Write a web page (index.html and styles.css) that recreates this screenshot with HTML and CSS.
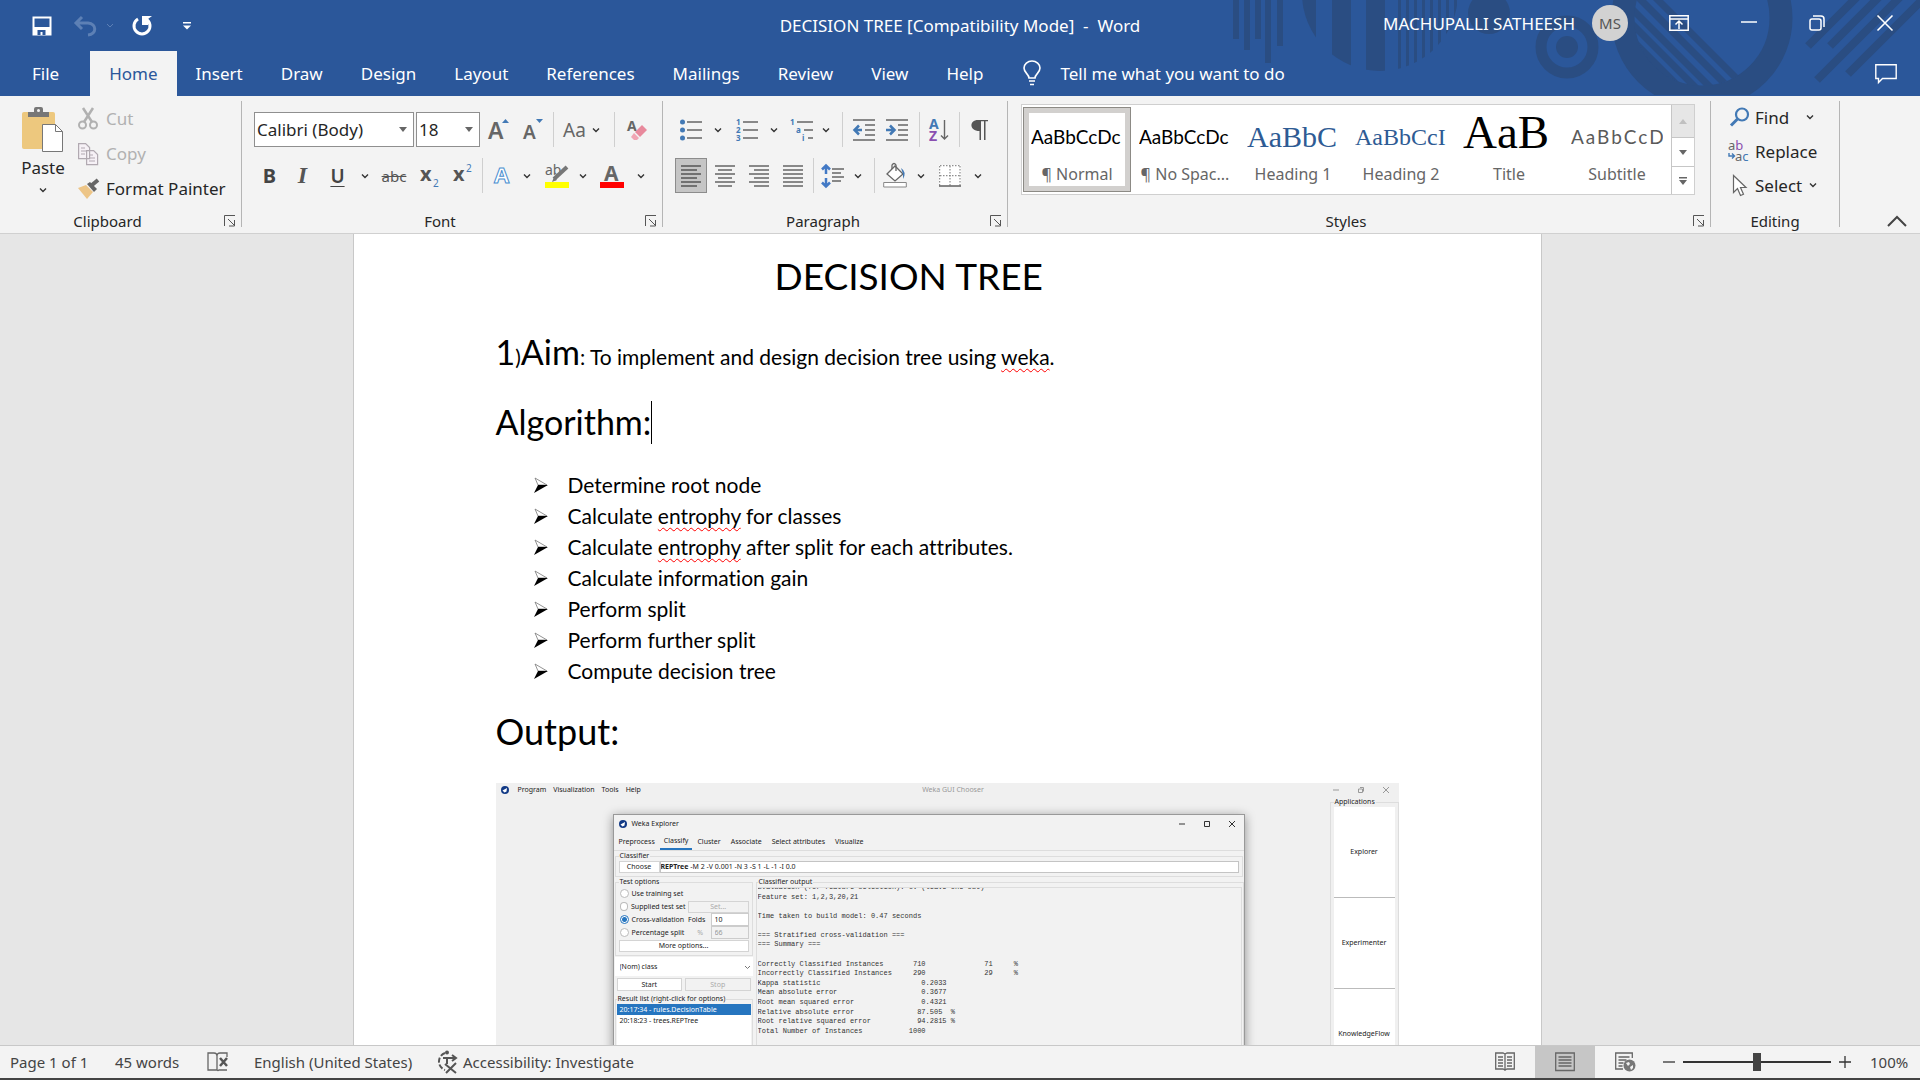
FILE: index.html
```html
<!DOCTYPE html>
<html lang="en">
<head>
<meta charset="utf-8">
<title>DECISION TREE [Compatibility Mode] - Word</title>
<link rel="stylesheet" href="styles.css">
</head>
<body>
<svg class="defs" aria-hidden="true">
  <symbol id="caret" viewBox="0 0 8 6"><path d="M1 1.5l3 3 3-3" fill="none" stroke="#333" stroke-width="1.4"/></symbol>
  <symbol id="launcher" viewBox="0 0 12 12"><path d="M.5 11V.5H11M4 4l6 6M10.500 5v6H5" fill="none" stroke="#555"/></symbol>
  <symbol id="weka" viewBox="0 0 8 8"><circle cx="4" cy="4" r="4" fill="#123a86"/><path d="M1.500 4.500L6 2l-.5 3.500-2 1z" fill="#fff"/></symbol>
  <symbol id="arrow" viewBox="0 0 14 16"><path d="M1 1l12 7H4z" fill="#fff" stroke="#777" stroke-width=".8"/><path d="M4 8h10L0 16z"/></symbol>
</svg>

<header class="header">
  <svg class="decor" width="700" height="96" viewBox="0 0 700 96" aria-hidden="true">
    <clipPath id="disc"><circle cx="160" cy="-7" r="78"/></clipPath>
    <clipPath id="hole"><circle cx="482" cy="18" r="68"/></clipPath>
    <clipPath id="cut"><path d="M0 0h700v95H0z"/></clipPath>
    <path d="M13 0h6v39h-6zM24 0h6v50h-6zM35 0h6v39h-6zM45 0h6v63h-6zM57 0h6v46h-6z"/>
    <path clip-path="url(#disc)" d="M80 0h16v80H80zM112 0h19v80h-19zM146 0h19v80h-19zM178 0h3v80h-3zM186 0h3v80h-3zM194 0h3v80h-3zM202 0h3v80h-3zM210 0h3v80h-3zM218 0h3v80h-3zM226 0h3v80h-3zM234 0h3v80h-3z"/>
    <circle cx="269" cy="13" r="21"/>
    <circle cx="347" cy="47" r="11"/>
    <g fill="none" stroke="#2a4d82">
      <circle cx="347" cy="47" r="26" stroke-width="11"/>
      <circle cx="482" cy="18" r="79" stroke-width="23" clip-path="url(#cut)"/>
      <path clip-path="url(#hole)" stroke-width="7" d="M380-8l100 100M395-8l100 100M413-8l100 100M430-8l100 100M364-8l100 100"/>
      <path stroke-width="8" d="M588 46l50-50M610 46l50-50M628 74l78-78M597 80l84-84"/>
    </g>
  </svg>

  <div class="titlebar">
    <div class="quick">
      <button aria-label="Save"><svg width="20" height="20"><path d="M1.500 1.500h17v17h-17z" fill="none" stroke="#fff" stroke-width="2"/><path d="M1 11h18v8H1z" fill="#fff"/><path d="M5.500 14h8v5h-3v-3h-2v3h-3z" fill="#2b579a"/></svg></button>
      <button aria-label="Undo"><svg width="24" height="20"><path d="M8 1L2 7l6 6M2 7h12c9 1 9 11 0 12" fill="none" stroke="#5d80b5" stroke-width="3"/></svg></button>
      <button aria-label="Undo history"><svg width="8" height="6"><path d="M1 1l3 3 3-3" fill="none" stroke="#5d80b5"/></svg></button>
      <button aria-label="Repeat"><svg width="22" height="22"><path d="M7 4a8 8 0 1 0 8 0" fill="none" stroke="#fff" stroke-width="3"/><path d="M11 1h10l-4 3v6h-6z" fill="#fff"/></svg></button>
      <button aria-label="Customize toolbar"><svg width="8" height="8"><path d="M0 0h8v1.500H0zM0 3.500h8l-4 4z" fill="#fff"/></svg></button>
    </div>
    <h1 class="doc-name">DECISION TREE [Compatibility Mode]&nbsp; -&nbsp; Word</h1>
    <div class="window-tools">
      <span class="user">MACHUPALLI SATHEESH</span>
      <span class="avatar">MS</span>
      <button aria-label="Ribbon display options"><svg width="20" height="16"><path d="M.8.8h18.400v14.400H.8zM1 4h18M10 14V6.500M6.500 9.500L10 6l3.500 3.500" fill="none" stroke="#fff" stroke-width="1.500"/></svg></button>
      <button aria-label="Minimize"><svg width="16" height="16"><path d="M0 7h16" stroke="#fff" stroke-width="1.500"/></svg></button>
      <button aria-label="Restore"><svg width="16" height="16"><rect x="1" y="4" width="11" height="11" rx="2" fill="none" stroke="#fff" stroke-width="1.500"/><path d="M4 1h8q3 0 3 3v8" fill="none" stroke="#fff" stroke-width="1.500"/></svg></button>
      <button aria-label="Close"><svg width="16" height="16"><path d="M.5.5l15 15M15.500.5l-15 15" stroke="#fff" stroke-width="1.600"/></svg></button>
    </div>
  </div>

  <nav class="tabs">
    <button class="file">File</button>
    <button class="active">Home</button>
    <button>Insert</button>
    <button>Draw</button>
    <button>Design</button>
    <button>Layout</button>
    <button>References</button>
    <button>Mailings</button>
    <button>Review</button>
    <button>View</button>
    <button>Help</button>
    <button class="tell"><svg width="18" height="25"><path d="M6 17c0-4-5-5-5-10a8 7 0 0 1 16 0c0 5-5 6-5 10zM6 20h6M7 23.500h4" fill="none" stroke="#fff" stroke-width="1.600"/></svg>Tell me what you want to do</button>
    <button class="comments" aria-label="Comments"><svg width="22" height="20"><path d="M.8.8h20.400v13.700H7.500L3.500 18.500v-4H.8z" fill="none" stroke="#fff" stroke-width="1.400"/></svg></button>
  </nav>
</header>

<section class="ribbon" aria-label="Home ribbon">
  <div class="group clipboard">
    <div class="clip-body">
      <button class="paste"><svg width="42" height="46"><path d="M2 5h29q2 0 2 2v33q0 2-2 2H2q-2 0-2-2V7q0-2 2-2z" fill="#edc87e"/><path d="M6 5h6V2q0-2 2-2h5q2 0 2 2v3h6v5H6z" fill="#777"/><circle cx="16.500" cy="3.500" r="1.500" fill="#f3f3f3"/><path d="M20.500 17.500h13l7 7v20h-20z" fill="#fff" stroke="#777"/><path d="M33.500 17.500v7h7" fill="none" stroke="#777"/></svg><span>Paste</span><svg width="8" height="6"><use href="#caret"/></svg></button>
      <div class="commands">
        <button class="off"><svg width="20" height="23"><g fill="none" stroke="#b1b1b1" stroke-width="2"><circle cx="4.500" cy="18" r="3.500"/><circle cx="15.500" cy="18" r="3.500"/><path d="M5 1l9 14M15 1L6 15" stroke-width="2.500"/></g></svg>Cut</button>
        <button class="off"><svg width="20" height="22"><g fill="#f6f1f6" stroke="#b1a9b1" stroke-width="1.200"><path d="M.6.6h7l4 4v11H.6zM8.600 7.600h7l4 4v10h-11z"/><path d="M3 5h4M3 8h5M3 11h4M11 12h4M11 15h6M11 18h6"/></g></svg>Copy</button>
        <button><svg width="22" height="20"><path d="M0 9l8-3 7 7-6 7z" fill="#edc587"/><path d="M9 5l3-2 7 7-3 3z" fill="#666"/><path d="M14 6l6-5" stroke="#666" stroke-width="4"/></svg>Format Painter</button>
      </div>
    </div>
    <h2>Clipboard</h2>
    <button class="launch" aria-label="Clipboard options"><svg width="12" height="12"><use href="#launcher"/></svg></button>
  </div>

  <div class="group font">
    <div class="row font-a">
      <label class="combo"><input value="Calibri (Body)" aria-label="Font"><svg width="8" height="5"><path d="M0 0h8L4 5z" fill="#666"/></svg></label>
      <label class="combo size"><input value="18" aria-label="Font size"><svg width="8" height="5"><path d="M0 0h8L4 5z" fill="#666"/></svg></label>
      <button aria-label="Grow font"><svg width="22" height="24"><text x="0" y="21" class="g-big">A</text><path d="M14 5l3.500-4L21 5z" fill="#4279b5"/></svg></button>
      <button aria-label="Shrink font"><svg width="20" height="24"><text x="0" y="21" class="g-mid">A</text><path d="M13 1h7l-3.500 4z" fill="#4279b5"/></svg></button>
      <i></i>
      <button class="case">Aa</button>
      <button aria-label="Case options"><svg width="8" height="6"><use href="#caret"/></svg></button>
      <i></i>
      <button aria-label="Clear formatting"><svg width="20" height="24"><text x="0" y="13" class="g-small">A</text><path d="M8 14l7-7 5 5-7 7z" fill="#e8899c"/><path d="M7 15l5 5-2 2H7l-3-3z" fill="#f0a5b3"/></svg></button>
    </div>
    <div class="row font-b">
      <button class="bold">B</button>
      <button class="italic">I</button>
      <button class="under">U</button>
      <button aria-label="Underline options"><svg width="8" height="6"><use href="#caret"/></svg></button>
      <button class="strike">abc</button>
      <button aria-label="Subscript"><svg width="20" height="26"><text x="0" y="18" class="g-x">x</text><text x="13" y="24" class="g-n">2</text></svg></button>
      <button aria-label="Superscript"><svg width="20" height="26"><text x="0" y="18" class="g-x">x</text><text x="13" y="9" class="g-n">2</text></svg></button>
      <i></i>
      <button aria-label="Text effects"><svg width="20" height="24"><text x="2" y="19" class="g-fx">A</text></svg></button>
      <button aria-label="Effect options"><svg width="8" height="6"><use href="#caret"/></svg></button>
      <button aria-label="Highlight"><svg width="24" height="26"><text x="0" y="12" class="g-ab">ab</text><path d="M22 4L9 16" stroke="#777" stroke-width="4"/><path d="M9 14l3 3-5 2z" fill="#777"/><path d="M0 19h24v6H0z" fill="#ff0"/></svg></button>
      <button aria-label="Highlight options"><svg width="8" height="6"><use href="#caret"/></svg></button>
      <button aria-label="Font colour"><svg width="24" height="26"><text x="4" y="18" class="g-col">A</text><path d="M0 19h24v6H0z" fill="#f00"/></svg></button>
      <button aria-label="Colour options"><svg width="8" height="6"><use href="#caret"/></svg></button>
    </div>
    <h2>Font</h2>
    <button class="launch" aria-label="Font options"><svg width="12" height="12"><use href="#launcher"/></svg></button>
  </div>

  <div class="group para">
    <div class="row para-a">
      <button aria-label="Bullets"><svg width="22" height="22"><path d="M7 3h15M7 11h15M7 19h15" stroke="#666" stroke-width="1.300"/><g fill="#4279b5"><circle cx="2.500" cy="3" r="2.500"/><circle cx="2.500" cy="11" r="2.500"/><circle cx="2.500" cy="19" r="2.500"/></g></svg></button>
      <button aria-label="Bullet options"><svg width="8" height="6"><use href="#caret"/></svg></button>
      <button aria-label="Numbering"><svg width="22" height="24"><path d="M7 4h15M7 12h15M7 20h15" stroke="#666" stroke-width="1.300"/><text class="g-l" x="0" y="7">1</text><text class="g-l" x="0" y="15">2</text><text class="g-l" x="0" y="23">3</text></svg></button>
      <button aria-label="Numbering options"><svg width="8" height="6"><use href="#caret"/></svg></button>
      <button aria-label="Multilevel list"><svg width="23" height="24"><path d="M7 4h16M14 12h9M18 20h5" stroke="#666" stroke-width="1.300"/><text class="g-l" x="0" y="7">1</text><text class="g-l" x="6" y="15">a</text><text class="g-l" x="12" y="23">i</text></svg></button>
      <button aria-label="List options"><svg width="8" height="6"><use href="#caret"/></svg></button>
      <i></i>
      <button aria-label="Decrease indent"><svg width="22" height="22"><path d="M0 1h22M12 6h10M12 11h10M12 16h10M0 21h22" stroke="#666" stroke-width="1.300"/><path d="M9 11H2M6 6.500L1.500 11 6 15.500" fill="none" stroke="#4279b5" stroke-width="2.500"/></svg></button>
      <button aria-label="Increase indent"><svg width="22" height="22"><path d="M0 1h22M12 6h10M12 11h10M12 16h10M0 21h22" stroke="#666" stroke-width="1.300"/><path d="M0 11h7M4 6.500L8.500 11 4 15.500" fill="none" stroke="#4279b5" stroke-width="2.500"/></svg></button>
      <i></i>
      <button aria-label="Sort"><svg width="20" height="24"><text x="0" y="11" class="g-az">A</text><text x="0" y="23" class="g-az z">Z</text><path d="M15.500 2v19M12 17.500l3.500 3.500 3.500-3.500" fill="none" stroke="#666" stroke-width="1.400"/></svg></button>
      <i></i>
      <button aria-label="Show marks"><svg width="17" height="22"><path d="M7 1h10v1.300h-2.500V21H13V2.300h-3V21H8.500V12C-2 12-2 1 7 1z" fill="#555"/></svg></button>
    </div>
    <div class="row para-b">
      <button class="on" aria-label="Align left"><svg width="20" height="22"><path d="M0 1h20M0 5h16M0 9h20M0 13h16M0 17h20M0 21h16" stroke="#555" stroke-width="1.300"/></svg></button>
      <button aria-label="Centre"><svg width="20" height="22"><path d="M0 1h20M3 5h14M0 9h20M3 13h14M0 17h20M3 21h14" stroke="#666" stroke-width="1.300"/></svg></button>
      <button aria-label="Align right"><svg width="20" height="22"><path d="M0 1h20M5 5h15M0 9h20M5 13h15M0 17h20M5 21h15" stroke="#666" stroke-width="1.300"/></svg></button>
      <button aria-label="Justify"><svg width="20" height="22"><path d="M0 1h20M0 5h20M0 9h20M0 13h20M0 17h20M0 21h20" stroke="#666" stroke-width="1.300"/></svg></button>
      <i></i>
      <button aria-label="Line spacing"><svg width="22" height="24"><path d="M10 5h12M10 9h9M10 13h12M10 17h9" stroke="#666" stroke-width="1.300"/><path d="M4 2v8M4 14v8M0 5.500L4 1.500l4 4M0 18.500l4 4 4-4" fill="none" stroke="#4279c5" stroke-width="2.500"/></svg></button>
      <button aria-label="Spacing options"><svg width="8" height="6"><use href="#caret"/></svg></button>
      <i></i>
      <button aria-label="Shading"><svg width="24" height="25"><path d="M4 11l8-8 8 8-8 7z" fill="#fff" stroke="#666" stroke-width="1.300"/><path d="M9 6V2q2-3 4 0v6" fill="none" stroke="#666" stroke-width="1.300"/><path d="M18 5q6 4 2 11v-5z" fill="#4279b5"/><path d="M.7 19.500h22.600v4.500H.7z" fill="#fff" stroke="#888"/></svg></button>
      <button aria-label="Shading options"><svg width="8" height="6"><use href="#caret"/></svg></button>
      <button aria-label="Borders"><svg width="22" height="22"><path d="M0 0h22v21H0z" fill="#fff"/><path d="M1 .7h20M.7 1v20M21 1v20M11 1v20M1 10.700h20" stroke="#777" stroke-dasharray="1.500 1.500"/><path d="M0 21h22" stroke="#555" stroke-width="1.400"/></svg></button>
      <button aria-label="Border options"><svg width="8" height="6"><use href="#caret"/></svg></button>
    </div>
    <h2>Paragraph</h2>
    <button class="launch" aria-label="Paragraph options"><svg width="12" height="12"><use href="#launcher"/></svg></button>
  </div>

  <div class="group styles">
    <div class="gallery">
      <button class="style chosen"><span class="sample">AaBbCcDc</span><span>¶ Normal</span></button>
      <button class="style"><span class="sample">AaBbCcDc</span><span>¶ No Spac...</span></button>
      <button class="style"><span class="sample s-h1">AaBbC</span><span>Heading 1</span></button>
      <button class="style"><span class="sample s-h2">AaBbCcI</span><span>Heading 2</span></button>
      <button class="style"><span class="sample s-title">AaB</span><span>Title</span></button>
      <button class="style"><span class="sample s-sub">AaBbCcD</span><span>Subtitle</span></button>
      <div class="scroller">
        <button class="dim" aria-label="Previous styles"><svg width="8" height="5"><path d="M0 5h8L4 0z" fill="#c0c0c0"/></svg></button>
        <button aria-label="Next styles"><svg width="8" height="5"><path d="M0 0h8L4 5z" fill="#666"/></svg></button>
        <button aria-label="More styles"><svg width="8" height="8"><path d="M0 0h8v1.500H0zM0 3h8L4 8z" fill="#666"/></svg></button>
      </div>
    </div>
    <h2>Styles</h2>
    <button class="launch" aria-label="Style options"><svg width="12" height="12"><use href="#launcher"/></svg></button>
  </div>

  <div class="group editing">
    <div class="commands">
      <button><svg width="22" height="20"><circle cx="14" cy="7.500" r="6" fill="none" stroke="#4279b5" stroke-width="2.200"/><path d="M9.500 12L3 18.500" stroke="#4279b5" stroke-width="3"/></svg>Find<svg class="more wide" width="8" height="6"><use href="#caret"/></svg></button>
      <button><svg width="22" height="22"><text x="0" y="10" class="g-rep">a<tspan fill="#8a4fb0">b</tspan></text><text x="7" y="21" class="g-rep">a<tspan fill="#4279b5">c</tspan></text><path d="M1 13v3h5M4 13.500L6.500 16 4 18.500" fill="none" stroke="#4279b5" stroke-width="1.400"/></svg>Replace</button>
      <button><svg width="22" height="23"><path d="M5.500 1.500v17l4-4 3 7 3-1.300-3-6.700h5.500z" fill="#fff" stroke="#666" stroke-width="1.200"/></svg>Select<svg class="more" width="8" height="6"><use href="#caret"/></svg></button>
    </div>
    <h2>Editing</h2>
  </div>
  <button class="collapse" aria-label="Collapse ribbon"><svg width="20" height="12"><path d="M1 11l9-9 9 9" fill="none" stroke="#444" stroke-width="2"/></svg></button>
</section>

<main class="workspace">
  <article class="page">
    <h2 class="title">DECISION TREE</h2>
    <p class="aim"><span class="large">1</span>)<span class="large">Aim</span>: To implement and design decision tree using <span class="typo">weka</span>.</p>
    <h3 class="algorithm">Algorithm:<span class="cursor"></span></h3>
    <ul class="steps">
      <li><svg width="14" height="16"><use href="#arrow"/></svg><span>Determine root node</span></li>
      <li><svg width="14" height="16"><use href="#arrow"/></svg><span>Calculate <span class="typo">entrophy</span> for classes</span></li>
      <li><svg width="14" height="16"><use href="#arrow"/></svg><span>Calculate <span class="typo">entrophy</span> after split for each attributes.</span></li>
      <li><svg width="14" height="16"><use href="#arrow"/></svg><span>Calculate information gain</span></li>
      <li><svg width="14" height="16"><use href="#arrow"/></svg><span>Perform split</span></li>
      <li><svg width="14" height="16"><use href="#arrow"/></svg><span>Perform further split</span></li>
      <li><svg width="14" height="16"><use href="#arrow"/></svg><span>Compute decision tree</span></li>
    </ul>
    <h3 class="output">Output:</h3>

    <section class="weka" aria-label="Weka GUI Chooser">
      <div class="weka-bar">
        <svg width="8" height="8"><use href="#weka"/></svg>
        <nav><a href="#program">Program</a><a href="#visualization">Visualization</a><a href="#tools">Tools</a><a href="#help">Help</a></nav>
        <span class="weka-name">Weka GUI Chooser</span>
        <span class="wins pale"><svg width="6" height="6"><path d="M0 3h6"/></svg><svg width="6" height="6"><path d="M.5 2h4v3.500h-4zM2 .5h3.500v4"/></svg><svg width="6" height="6"><path d="M0 0l6 6M6 0L0 6"/></svg></span>
      </div>
      <div class="weka-body">
        <section class="explorer">
          <div class="ex-title"><svg width="8" height="8"><use href="#weka"/></svg>Weka Explorer
            <span class="wins"><svg width="6" height="6"><path d="M0 3h6"/></svg><svg width="6" height="6"><path d="M.5.5h5v5h-5z"/></svg><svg width="6" height="6"><path d="M0 0l6 6M6 0L0 6"/></svg></span></div>
          <nav class="ex-tabs"><button>Preprocess</button><button class="cur">Classify</button><button>Cluster</button><button>Associate</button><button>Select attributes</button><button>Visualize</button></nav>
          <fieldset class="classifier"><legend>Classifier</legend>
            <div class="pick"><button>Choose</button><div class="scheme"><b>REPTree</b> -M 2 -V 0.001 -N 3 -S 1 -L -1 -I 0.0</div></div>
          </fieldset>
          <div class="ex-main">
            <div class="side">
              <fieldset class="options"><legend>Test options</legend>
                <label class="full"><input type="radio" name="t">Use training set</label>
                <label><input type="radio" name="t">Supplied test set</label><button class="set" disabled>Set...</button>
                <label><input type="radio" name="t" checked>Cross-validation</label><label for="folds">Folds</label><input class="num" id="folds" value="10">
                <label><input type="radio" name="t">Percentage split</label><label class="gray" for="pct">%</label><input class="num" id="pct" value="66" disabled>
                <button class="full">More options...</button>
              </fieldset>
              <div class="picker"><select aria-label="Class attribute"><option>(Nom) class</option></select><svg width="5" height="4"><path d="M0 1l2.500 2.500L5 1" fill="none" stroke="#777"/></svg></div>
              <div class="run"><button>Start</button><button disabled>Stop</button></div>
              <fieldset class="results"><legend>Result list (right-click for options)</legend>
                <ul><li class="sel">20:17:34 - rules.DecisionTable</li><li>20:18:23 - trees.REPTree</li></ul>
              </fieldset>
            </div>
            <fieldset class="log"><legend>Classifier output</legend>
<div class="log-view"><pre>Evaluation (for feature selection): CV (leave one out)
Feature set: 1,2,3,20,21

Time taken to build model: 0.47 seconds

=== Stratified cross-validation ===
=== Summary ===

Correctly Classified Instances       710              71     %
Incorrectly Classified Instances     290              29     %
Kappa statistic                        0.2033
Mean absolute error                    0.3677
Root mean squared error                0.4321
Relative absolute error               87.505  %
Root relative squared error           94.2815 %
Total Number of Instances           1000
</pre></div>
            </fieldset>
          </div>
        </section>
        <fieldset class="apps"><legend>Applications</legend><button>Explorer</button><button>Experimenter</button><button>KnowledgeFlow</button></fieldset>
      </div>
    </section>
  </article>
</main>

<footer class="status">
  <span class="pages">Page 1 of 1</span>
  <span class="words">45 words</span>
  <button class="proof" aria-label="Proofing errors"><svg width="22" height="20"><path d="M10 18H1V1h6q3 0 3 3v14q1 1 2 0h8M10 4q0-3 3-3h7v4" fill="none" stroke="#666" stroke-width="1.300"/><path d="M13 6l7 8M20 6l-7 8" stroke="#555" stroke-width="2.500"/></svg></button>
  <span class="lang">English (United States)</span>
  <button class="access"><svg width="22" height="24"><path d="M8 3a9 9 0 0 0 0 17" fill="none" stroke="#555" stroke-width="2" stroke-dasharray="5 2"/><circle cx="10" cy="2.500" r="2" fill="#555"/><path d="M6 8h12M15 5l4 3-4 3M10 8v6M8 14l11 9M19 13L9 23" fill="none" stroke="#555" stroke-width="2"/></svg>Accessibility: Investigate</button>
  <div class="views">
    <button aria-label="Read mode"><svg width="20" height="20"><path d="M10 2v17M10 2L8 1H.7v16H8l2 1 2-1h7.300V1H12zM3 5h5M3 8h5M3 11h5M3 14h5M12 5h5M12 8h5M12 11h5M12 14h5" fill="none" stroke="#666" stroke-width="1.300"/></svg></button>
    <button class="current" aria-label="Print layout"><svg width="20" height="20"><path d="M.7 1h18.600v17.500H.7zM3.500 5h13M3.500 8h13M3.500 11h13M3.500 14h13" fill="none" stroke="#666" stroke-width="1.300"/></svg></button>
    <button aria-label="Web layout"><svg width="21" height="20"><path d="M8 17H.7V1h16.600v5M3.500 5h11M3.500 8h8M3.500 11h5M3.500 14h4" fill="none" stroke="#666" stroke-width="1.300"/><circle cx="14.500" cy="13.500" r="6" fill="#777"/><path d="M11 11l3-1 1 2-2 2zM15 15l3-2v3l-2 2z" fill="#f3f3f3"/></svg></button>
  </div>
  <button aria-label="Zoom out"><svg width="12" height="12"><path d="M0 6h12" stroke="#333" stroke-width="1.300"/></svg></button>
  <input class="zoom" type="range" min="0" max="100" value="50" aria-label="Zoom">
  <button aria-label="Zoom in"><svg width="12" height="12"><path d="M0 6h12M6 0v12" stroke="#333" stroke-width="1.300"/></svg></button>
  <span class="percent">100%</span>
</footer>
</body>
</html>
```

FILE: styles.css
```css
* { box-sizing: border-box; }

body {
  margin: 0;
  height: 100vh;
  display: flex;
  flex-direction: column;
  overflow: hidden;
  font-family: "Noto Sans", "Open Sans", sans-serif;
  font-size: 17px;
  color: #262626;
  background: #e6e6e6;
}

button {
  display: inline-flex;
  align-items: center;
  justify-content: center;
  padding: 0;
  border: 0;
  background: none;
  font: inherit;
  color: inherit;
  white-space: nowrap;
}

input { font: inherit; color: inherit; }
svg { display: block; flex: none; overflow: visible; }
h1, h2, h3, p, ul, pre { margin: 0; padding: 0; font-weight: 400; font-size: inherit; }
ul { list-style: none; }
fieldset { margin: 0; min-width: 0; }
.defs { position: absolute; width: 0; height: 0; }

/* Title bar and tabs */
.header { position: relative; background: #2b579a; color: #fff; }
.decor { position: absolute; top: 0; right: 0; fill: #2a4d82; }
.titlebar {
  position: relative;
  display: grid;
  grid-template-columns: 1fr auto 1fr;
  align-items: center;
  height: 51px;
}
.quick { display: flex; align-items: center; padding-left: 32px; }
.quick button { margin-right: 22px; }
.quick button:nth-child(2) { margin-right: 8px; }
.quick button:nth-child(3) { margin-right: 17px; }
.quick button:nth-child(4) { margin-right: 30px; }
.window-tools { display: flex; align-items: center; justify-content: flex-end; height: 46px; align-self: start; padding-right: 27px; }
.user { margin-right: 17px; }
.avatar {
  width: 36px;
  height: 36px;
  margin-right: 41px;
  border-radius: 50%;
  background: #d2d2d2;
  color: #555;
  font-size: 15px;
  line-height: 36px;
  text-align: center;
}
.window-tools button { margin-right: 52px; }
.window-tools button:last-child { margin-right: 0; }

.tabs { position: relative; display: flex; height: 45px; }
.tabs button { padding: 0 19px; }
.tabs .file { padding: 0 31px 0 32px; }
.tabs .active { background: #f3f3f3; color: #2b579a; }
.tabs .tell { gap: 19px; padding: 0 0 0 21px; }
.tabs .comments { margin-left: auto; padding: 0 23px; }

/* Ribbon */
.ribbon {
  display: flex;
  height: 138px;
  padding: 5px 0 6px;
  background: #f3f3f3;
  border-bottom: 1px solid #d0d0d0;
}
.group { position: relative; display: flex; flex-direction: column; border-right: 1px solid #b5b5b5; }
.group h2 { margin-top: auto; font-size: 15px; line-height: 12px; text-align: center; }
.launch { position: absolute; right: 5px; bottom: 0; }
.clipboard { width: 242px; }
.clipboard h2 { padding-right: 26px; }
.font { width: 421px; padding: 11px 0 0 12px; }
.font h2 { padding-right: 36px; }
.para { width: 345px; padding: 11px 0 0 12px; }
.para h2 { padding-right: 36px; }
.styles { flex: 1; min-width: 0; padding: 3px 15px 0 13px; }
.styles h2 { padding-right: 24px; }
.editing { width: 129px; padding-left: 17px; }
.editing h2 { padding-right: 17px; }
.collapse { flex: 0 0 80px; align-items: flex-end; padding-right: 13px; justify-content: flex-end; }

.clip-body { display: flex; padding-left: 20px; }
.paste { flex-direction: column; justify-content: flex-start; width: 46px; margin-right: 12px; padding-top: 6px; line-height: 30px; }
.paste svg:last-child { margin-top: 4px; }
.commands button { display: flex; gap: 6px; height: 35px; }
.clip-body .commands svg { width: 22px; }
.off { color: #b1b1b1; }
.editing .commands button { height: 34px; gap: 5px; }
.editing .commands { margin-top: -1px; }
.more { margin-left: 2px; }
.more.wide { margin-left: 12px; }

.row { display: grid; height: 35px; justify-content: start; }
.row + .row { margin-top: 11px; }
.row i { justify-self: center; width: 1px; background: #cfcfcf; }
.font-a { grid-template-columns: 162px 64px 38px 30px 10px 33px 10px 26px 19px; }
.font-b { grid-template-columns: 31px 35px 35px 20px 38px 33px 33px 6px 33px 18px 42px 10px 48px 10px; }
.para-a { grid-template-columns: 32px 22px 36px 18px 36px 14px 18px 26px 40px 4px 36px 4px 36px; }
.para-b { grid-template-columns: 32px 36px 32px 36px 4px 36px 14px 18px 24px 28px 30px 26px; }
.combo { display: flex; align-items: center; width: 160px; padding: 0 6px 0 2px; border: 1px solid #8f8f8f; background: #fff; }
.combo input { flex: 1; min-width: 0; padding: 0; border: 0; background: none; outline: 0; }
.combo.size { width: 64px; }
.on { border: 1px solid #8c8c8c; background: #c5c5c5; }
.case { color: #666; font-size: 19px; }
.bold { font-weight: 700; font-size: 20px; color: #444; }
.italic { font: italic 700 24px "Liberation Serif", serif; color: #555; }
.under { font-weight: 600; font-size: 19px; color: #444; text-decoration: underline; text-underline-offset: 3px; }
.strike { font-size: 15px; color: #555; text-decoration: line-through; }
.row text, .commands text { font-weight: 700; fill: #666; }
.row .g-big { font-size: 23px; font-weight: 600; }
.row .g-mid { font-size: 19px; font-weight: 600; }
.row .g-small { font-size: 14px; }
.row .g-x { font-size: 20px; fill: #555; }
.row .g-n { font-size: 10px; fill: #4279b5; font-weight: 400; }
.row .g-fx { font-size: 22px; fill: #fff; stroke: #4a8fd0; stroke-width: 1; }
.row .g-ab { font-size: 14px; font-weight: 400; }
.row .g-col { font-size: 21px; }
.row .g-l { font-size: 8px; fill: #4279b5; }
.row .g-az { font-size: 14px; fill: #4279b5; }
.row .g-az.z { fill: #8a4fb0; }
.commands .g-rep { font-size: 13px; font-weight: 400; }

.gallery { display: flex; height: 91px; overflow: hidden; padding-left: 1px; border: 1px solid #cfcfcf; background: #fff; }
.style { flex: 0 0 108px; flex-direction: column; height: 85px; margin-top: 2px; padding-top: 10px; justify-content: flex-start; font-size: 16px; color: #666; line-height: 24px; }
.chosen { border: 1px solid #8c8a85; box-shadow: inset 0 0 0 5px #d2d0ce; padding-top: 9px; }
.sample { display: block; width: 92px; height: 45px; overflow: hidden; text-align: left; font: 19px/40px Lato, sans-serif; color: #000; }
.sample.s-h1 { font: 30px/40px "Liberation Serif", serif; color: #2e5b94; }
.sample.s-h2 { font: 24px/40px "Liberation Serif", serif; color: #2e5b94; }
.sample.s-title { font: 47px/31px "Liberation Serif", serif; }
.sample.s-sub { color: #5a5a5a; letter-spacing: 2px; }
.scroller { display: grid; grid-template-rows: 32px 29px 28px; flex: 0 0 23px; margin-left: auto; border-left: 1px solid #c6c6c6; }
.scroller button + button { border-top: 1px solid #c6c6c6; }
.dim { background: #e6e6e6; }

/* Document */
.workspace { flex: 1; min-height: 0; overflow: hidden; padding-right: 26px; background: #e6e6e6; }
.page {
  max-width: 1189px;
  min-height: 100%;
  margin: 0 auto;
  padding: 18px 142px 0;
  border: solid #c8c8c8;
  border-width: 0 1px;
  background: #fff;
  color: #000;
  font: 21px/31px Lato, sans-serif;
  font-variant-ligatures: none;
}
.title { padding-left: 279px; font-size: 37px; line-height: 48px; }
.aim { margin-top: 28px; line-height: 48px; }
.large { font-size: 34px; }
.algorithm { display: flex; align-items: center; margin-top: 17px; font-size: 34px; line-height: 48px; }
.cursor { width: 1px; height: 43px; background: #000; }
.typo { text-decoration: underline wavy #f00 1px; text-underline-offset: 3px; text-decoration-skip-ink: none; }
.steps { margin-top: 23px; }
.steps li { display: flex; align-items: center; gap: 20px; padding-left: 38px; }
.output { margin: 21px 0 28px; font-size: 36px; line-height: 48px; }

/* Weka windows shown in the document */
.weka { font: 7px/10px "Noto Sans", sans-serif; background: #f0f0f0; color: #222; }
.weka a { color: inherit; text-decoration: none; }
.weka input, .weka select { font: inherit; }
.weka-bar { display: grid; grid-template-columns: 8px 1fr auto 1fr; align-items: center; gap: 9px; height: 14px; padding: 0 10px 0 5px; }
.weka-bar nav { display: flex; gap: 7px; }
.weka-name { color: #999; }
.wins { display: flex; gap: 19px; margin-left: auto; fill: none; stroke: #333; }
.wins.pale { stroke: #999; }
.weka-body { display: flex; justify-content: space-between; height: 400px; }
.explorer {
  display: flex;
  flex-direction: column;
  width: 632px;
  margin: 17px 0 0 117px;
  border: 1px solid #999;
  background: #f2f2f2;
  box-shadow: 0 2px 10px rgba(0, 0, 0, .4);
}
.ex-title { display: flex; align-items: center; gap: 5px; height: 18px; padding: 0 9px 0 5px; }
.ex-tabs { display: flex; height: 18px; border-bottom: 1px solid #ddd; }
.ex-tabs button { padding: 0 5px; }
.ex-tabs .cur { padding: 0 4px; border-bottom: 2px solid #2675bf; }
.explorer fieldset, .apps { border: 1px solid #ddd; padding: 0 3px; }
.weka legend { padding: 0 1px; line-height: 10px; }
.explorer .classifier { height: 26px; margin: 0 1px; }
.pick { display: flex; }
.pick button, .options button, .run button { border: 1px solid #d4d4d4; background: #fff; }
.pick button { width: 41px; height: 12px; }
.scheme { flex: 1; height: 12px; border: 1px solid #c4c4c4; background: #fff; line-height: 10px; overflow: hidden; }
.ex-main { flex: 1; display: flex; gap: 3px; min-height: 0; }
.side { display: flex; flex-direction: column; width: 138px; margin-left: 1px; }
.options { display: grid; grid-template-columns: 67px 20px 38px; grid-auto-rows: 13px; justify-content: space-between; align-items: center; height: 79px; }
.options label { display: flex; align-items: center; gap: 3px; white-space: nowrap; }
.options input[type=radio] { appearance: none; width: 9px; height: 9px; margin: 0 0 0 1px; border: 1px solid #bbb; border-radius: 50%; background: #fff; }
.options input[type=radio]:checked { border-color: #2675bf; background: radial-gradient(#2675bf 0 2px, #fff 3px); }
.options .full { grid-column: 1 / 4; }
.options .set { grid-column: 2 / 4; height: 12px; }
.options button:disabled, .run button:disabled, .gray { background: #f2f2f2; color: #aaa; }
.options .gray { justify-content: flex-end; padding-right: 5px; }
.num { width: 38px; height: 13px; padding: 0 3px; border: 1px solid #ccc; background: #fff; }
.num:disabled { background: #f2f2f2; color: #999; }
.picker { display: grid; align-items: center; height: 19px; margin-top: 1px; }
.picker > * { grid-area: 1 / 1; }
.picker svg { justify-self: end; margin-right: 3px; }
.picker select { appearance: none; height: 19px; padding: 0 5px; border: 0; background: #fff; color: #222; }
.run { display: grid; grid-template-columns: 1fr 1fr; gap: 3px; margin: 2px 2px 3px; height: 13px; }
.explorer .results { flex: 1; padding: 0 1px; }
.results ul { height: 100%; background: #fff; }
.results li { padding-left: 3px; line-height: 11px; }
.results .sel { background: #2675bf; color: #fff; }
.explorer .log { flex: 1; padding: 0 1px; }
.log-view { height: 300px; overflow: hidden; border: solid #ddd; border-width: 1px 1px 0 0; }
.log pre { margin-top: -5px; font: 7px/1.37 "Liberation Mono", monospace; color: #333; }
.apps { width: 69px; height: 380px; }
.apps button { display: flex; width: 100%; height: 91px; border-bottom: 1px solid #bbb; background: #fff; }

/* Status bar */
.status {
  display: flex;
  align-items: center;
  height: 35px;
  padding-left: 10px;
  border-top: 1px solid #c8c8c8;
  border-bottom: 2px solid #444;
  background: #f3f3f3;
  font-size: 15px;
  color: #444;
}
.pages { width: 105px; }
.words { width: 92px; }
.proof { margin-right: 25px; }
.lang { width: 183px; }
.access { gap: 4px; }
.views { display: flex; align-self: stretch; margin: 0 8px 0 auto; }
.views button { width: 60px; }
.current { background: #c6c6c6; }
.zoom { appearance: none; width: 148px; height: 18px; margin: 0 8px; background: linear-gradient(#333, #333) center / 100% 2px no-repeat; }
.zoom::-webkit-slider-thumb { appearance: none; width: 8px; height: 18px; background: #444; }
.percent { width: 69px; padding-left: 19px; }
```
